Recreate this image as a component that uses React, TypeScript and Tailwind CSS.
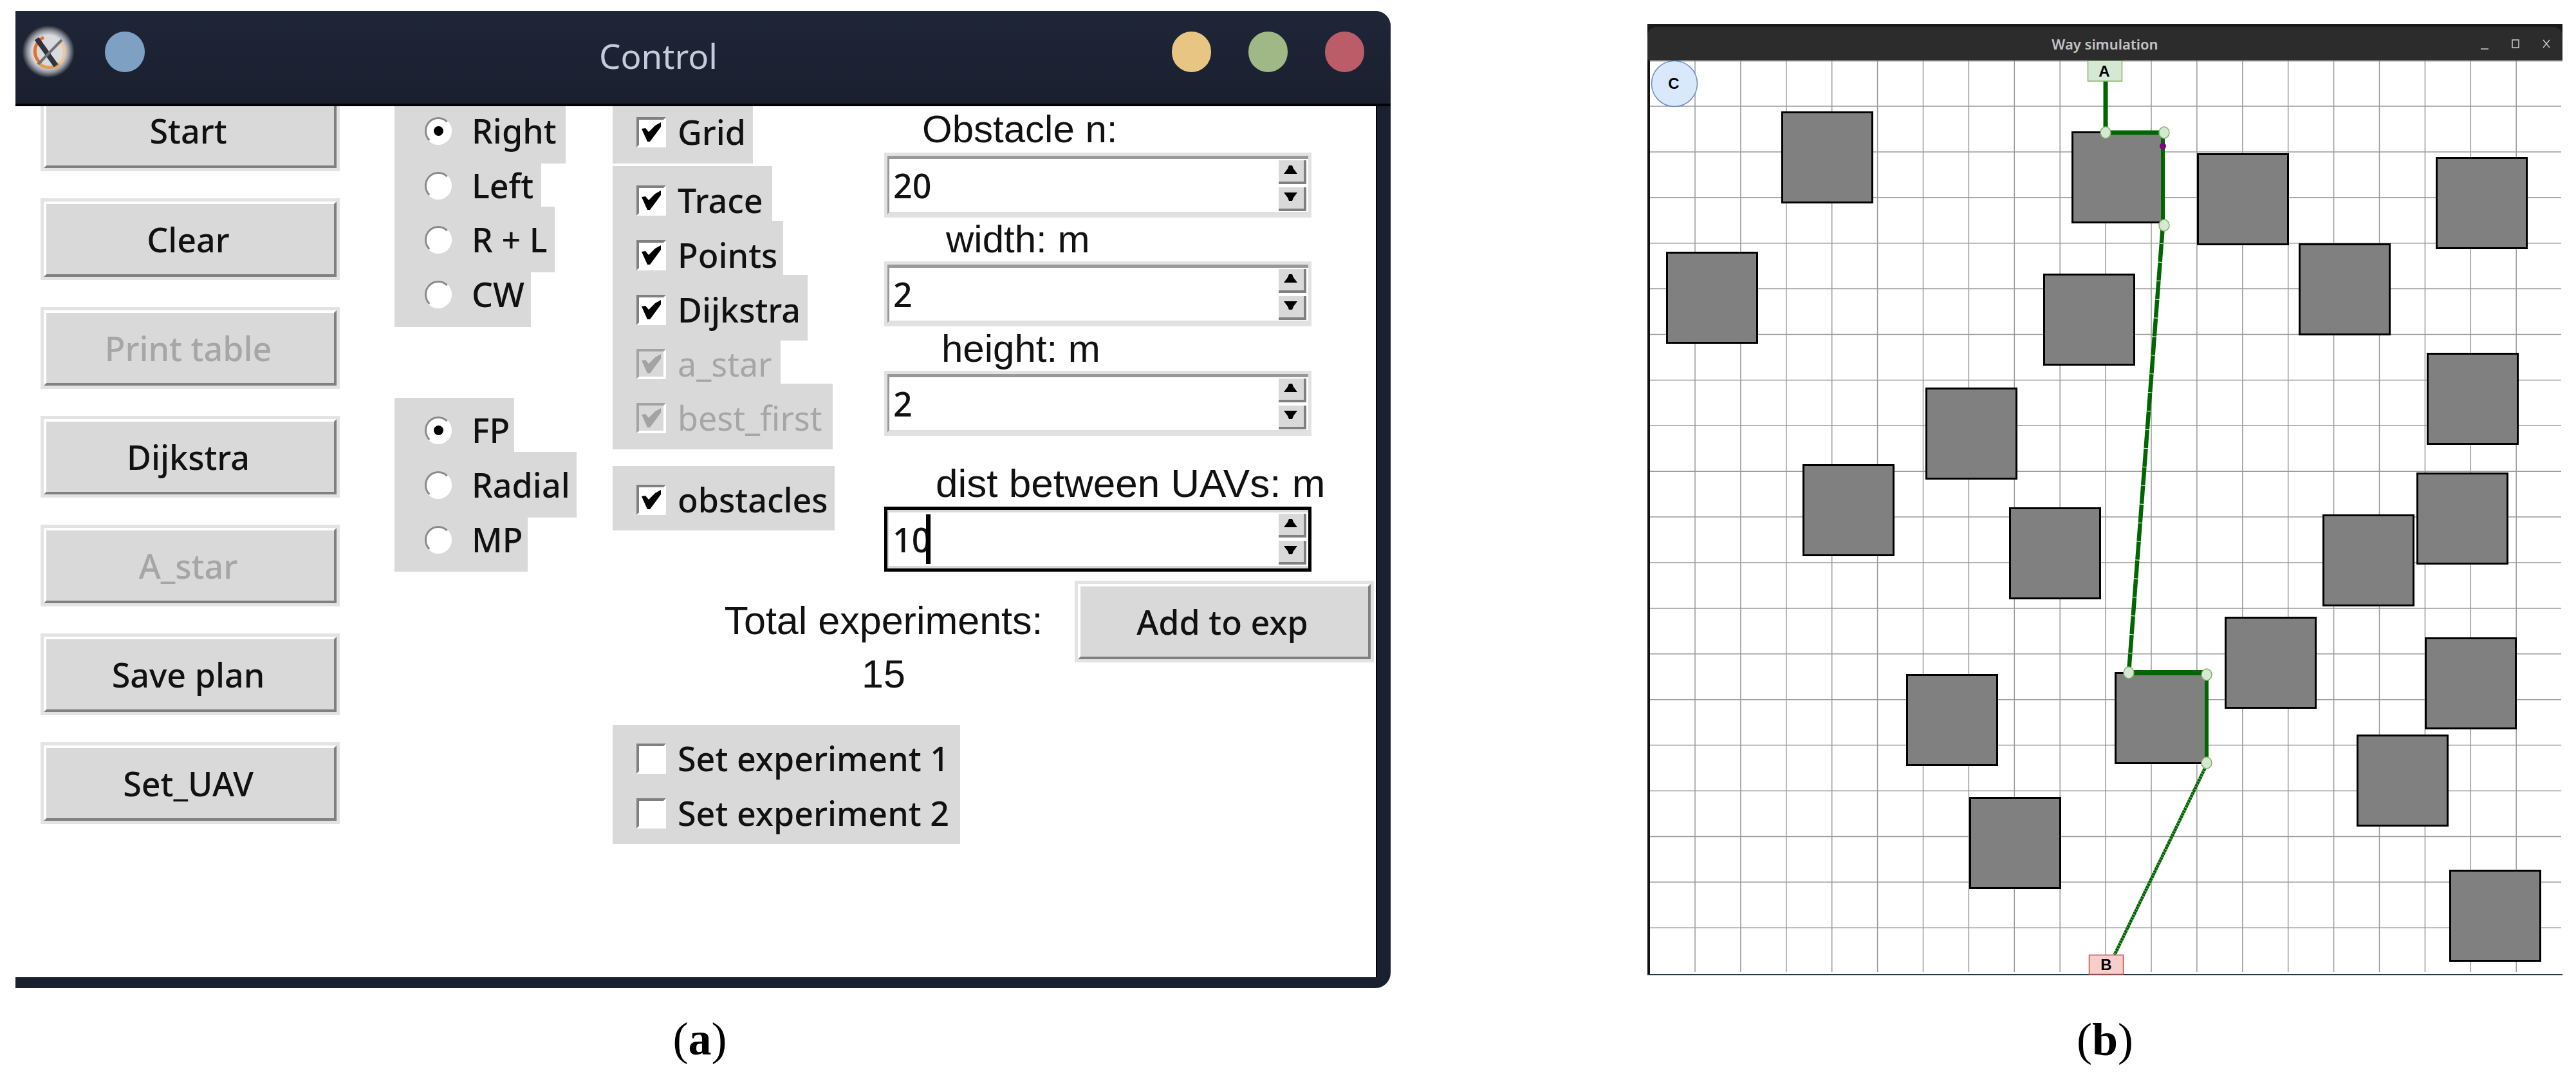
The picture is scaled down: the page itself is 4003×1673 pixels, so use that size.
import React from "react";

const buttons = [
  { label: "Start" },
  { label: "Clear" },
  { label: "Print table", disabled: true },
  { label: "Dijkstra" },
  { label: "A_star", disabled: true },
  { label: "Save plan" },
  { label: "Set_UAV" },
];

const modeRadios = [
  { label: "Right", on: true, cls: "h-[89px] w-[266px] pt-[17px]" },
  { label: "Left", cls: "h-[67px] w-[228px] pt-[13px]" },
  { label: "R + L", cls: "h-[102px] w-[249px] pt-[30px]" },
  { label: "CW", cls: "h-[85px] w-[212px] pt-[13px]" },
];

const planRadios = [
  { label: "FP", on: true, cls: "h-[84px] w-[186px] pt-[29px]" },
  { label: "Radial", cls: "h-[102px] w-[283px] pt-[30px]" },
  { label: "MP", cls: "h-[84px] w-[207px] pt-[13px]" },
];

const traceChecks = [
  { label: "Trace", cls: "h-[85px] w-[248px] pt-[30px]" },
  { label: "Points", cls: "h-[84px] w-[265px] pt-[30px]" },
  { label: "Dijkstra", cls: "h-[102px] w-[303px] pt-[31px]" },
  { label: "a_star", disabled: true, cls: "h-[67px] w-[261px] pt-[13px]" },
  { label: "best_first", disabled: true, cls: "h-[102px] w-[342px] pt-[30px]" },
];

const obstacles = [
  [2768, 174], [2589, 392], [3219, 205], [3175, 426], [3414, 239],
  [3785, 245], [3572, 379], [3771, 549], [2992, 603], [2801, 722],
  [3122, 789], [3609, 800], [3755, 735], [3457, 959], [3768, 991],
  [2962, 1048], [3286, 1045], [3662, 1142], [3060, 1239], [3806, 1352],
];

const nodes = [
  [3272, 206], [3363, 206], [3363, 350], [3308, 1045], [3429, 1048], [3429, 1185],
];

const verticals = Array.from({ length: 19 }, (_, i) => 2634 + i * 70.9);
const horizontals = Array.from({ length: 19 }, (_, i) => 165 + i * 70.9);

function TkButton({ label, disabled }: { label: string; disabled?: boolean }) {
  return (
    <div className="h-[127px] w-[465px] shrink-0 border-[5px] border-[#e3e3e3]">
      <div
        className={`flex h-full items-center justify-center border-[4px] border-t-white border-l-white border-r-[#808080] border-b-[#808080] bg-[#d9d9d9] pr-[6px] text-[52px] font-medium ${
          disabled ? "text-[#a6a6a6]" : "text-[#111]"
        }`}
      >
        {label}
      </div>
    </div>
  );
}

function Radio({ label, on, cls }: { label: string; on?: boolean; cls: string }) {
  return (
    <div className={`flex items-start bg-[#d9d9d9] pl-[47px] ${cls}`}>
      <div className="flex h-[43px] w-[42px] items-center justify-center rounded-full border-[3px] border-t-[#8a8a8a] border-l-[#8a8a8a] border-r-white border-b-white bg-white">
        {on && <div className="h-[15px] w-[15px] rounded-full bg-black" />}
      </div>
      <span className="ml-[31px] text-[52px] leading-[41px] font-medium text-[#111]">{label}</span>
    </div>
  );
}

function Check({
  label,
  checked = true,
  disabled,
  cls,
}: {
  label: string;
  checked?: boolean;
  disabled?: boolean;
  cls: string;
}) {
  return (
    <div className={`flex items-start bg-[#d9d9d9] pl-[37px] ${cls}`}>
      <div
        className={`h-[47px] w-[46px] border-[4px] border-r-white border-b-white ${
          disabled ? "border-t-[#a3a3a3] border-l-[#a3a3a3] bg-[#d9d9d9]" : "border-t-[#808080] border-l-[#808080] bg-white"
        }`}
      >
        {checked && (
          <svg viewBox="4 4 38 39" className="block h-full w-full">
            <polygon
              points="8,18 14,17 19,23 29,13 38,8 38,15 21,38 17,38"
              fill={disabled ? "#a3a3a3" : "#000"}
            />
          </svg>
        )}
      </div>
      <span
        className={`ml-[18px] text-[52px] leading-[45px] whitespace-nowrap ${
          disabled ? "text-[#a6a6a6]" : "font-medium text-[#111]"
        }`}
      >
        {label}
      </span>
    </div>
  );
}

function Spin({ value, focused }: { value: string; focused?: boolean }) {
  return (
    <div className={`h-[101px] w-[664px] border-[5px] ${focused ? "border-black" : "border-[#e2e2e2]"}`}>
      <div
        className={`flex h-full items-center bg-white pl-[6px] pr-[3px] ${
          focused
            ? "border-t-[4px] border-l-[2px] border-b-[4px] border-[#d9d9d9]"
            : "border-t-[5px] border-l-[3px] border-b-[4px] border-t-[#999] border-l-[#999] border-b-[#e0e0e0]"
        }`}
      >
        <span className="text-[52px] font-medium text-[#111]">{value}</span>
        {focused && <span className="-ml-[8px] h-[77px] w-[7px] bg-black" />}
        <div className="ml-auto flex w-[43px] flex-col gap-[5px]">
          <div className="h-[37px] border-r-[4px] border-b-[4px] border-[#808080] bg-[#d9d9d9]">
            <svg viewBox="0 0 39 33" className="block h-full w-full">
              <polygon points="8,21 14,13 16,8 21,8 23,13 29,21" fill="#000" />
            </svg>
          </div>
          <div className="h-[37px] border-r-[4px] border-b-[4px] border-[#808080] bg-[#d9d9d9]">
            <svg viewBox="0 0 39 33" className="block h-full w-full">
              <polygon points="8,8 29,8 23,16 21,21 16,21 14,16" fill="#000" />
            </svg>
          </div>
        </div>
      </div>
    </div>
  );
}

function XLogo() {
  return (
    <svg width="82" height="82" viewBox="0 0 82 82">
      <defs>
        <radialGradient id="xglow">
          <stop offset="0.62" stopColor="#d8dade" />
          <stop offset="0.8" stopColor="#8d9098" />
          <stop offset="1" stopColor="#1a2030" />
        </radialGradient>
      </defs>
      <circle cx="41" cy="41" r="41" fill="url(#xglow)" />
      <path d="M34 19 A24 24 0 0 0 30 60" stroke="#e8702a" strokeWidth="5" fill="none" />
      <path d="M28 61 A24 24 0 0 0 58 60" stroke="#e39a55" strokeWidth="5" fill="none" />
      <path d="M58 60 A24 24 0 0 0 60 26" stroke="#f2c68c" strokeWidth="4" fill="none" />
      <line x1="23" y1="21" x2="53" y2="63" stroke="#2f333b" strokeWidth="8" />
      <line x1="62" y1="23" x2="25" y2="61" stroke="#6e7278" strokeWidth="4" />
    </svg>
  );
}

function ControlWindow() {
  return (
    <div className="flex h-[1518px] w-[2137px] shrink-0 flex-col rounded-r-[24px] bg-[#1a2030] pb-[17px] pr-[21px] font-['Noto_Sans',sans-serif]">
      <div className="-mr-[21px] flex h-[148px] shrink-0 items-start rounded-tr-[24px] border-b-[4px] border-black bg-linear-to-b from-[#1f2638] to-[#191f2e] pl-[10px] pr-[41px]">
        <div className="mt-[22px] flex items-center gap-[47px]">
          <XLogo />
          <div className="h-[63px] w-[62px] rounded-full bg-[#7da0c3]" />
        </div>
        <div className="mt-[34px] flex flex-1 justify-center text-[53px] leading-[72px] text-[#c3ccd8]">Control</div>
        <div className="mt-[32px] flex gap-[58px]">
          <div className="h-[63px] w-[61px] rounded-full bg-[#e8c583]" />
          <div className="h-[63px] w-[61px] rounded-full bg-[#a0b786]" />
          <div className="h-[63px] w-[61px] rounded-full bg-[#bb5c68]" />
        </div>
      </div>

      <div className="flex min-h-0 flex-1 items-start overflow-hidden border-r-[2px] border-black bg-white pl-[39px]">
        <div className="-mt-[26px] flex shrink-0 flex-col gap-[42px]">
          {buttons.map((b) => (
            <TkButton key={b.label} label={b.label} disabled={b.disabled} />
          ))}
        </div>

        <div className="ml-[85px] w-[283px] shrink-0">
          {modeRadios.map((r) => (
            <Radio key={r.label} {...r} />
          ))}
          <div className="h-[110px]" />
          {planRadios.map((r) => (
            <Radio key={r.label} {...r} />
          ))}
        </div>

        <div className="ml-[56px] flex w-[1186px] shrink-0 flex-col">
          <div className="flex">
            <div className="w-[345px] shrink-0">
              <Check label="Grid" cls="h-[89px] w-[218px] pt-[17px]" />
              <div className="mt-[4px]">
                {traceChecks.map((c) => (
                  <Check key={c.label} {...c} />
                ))}
              </div>
              <div className="mt-[26px]">
                <Check label="obstacles" cls="h-[100px] w-[345px] pt-[29px]" />
              </div>
            </div>

            <div className="ml-[77px] flex w-[664px] flex-col font-['Liberation_Sans',sans-serif] text-[60px] whitespace-nowrap text-[#111]">
              <div className="flex h-[72px] items-center pl-[59px]">Obstacle n:</div>
              <div className="font-['Noto_Sans',sans-serif]">
                <Spin value="20" />
              </div>
              <div className="flex h-[68px] items-center pl-[96px]">width: m</div>
              <div className="font-['Noto_Sans',sans-serif]">
                <Spin value="2" />
              </div>
              <div className="flex h-[69px] items-center pl-[89px]">height: m</div>
              <div className="-mb-px font-['Noto_Sans',sans-serif]">
                <Spin value="2" />
              </div>
              <div className="flex h-[111px] items-end pb-[6px] pl-[80px] text-[62px] leading-[60px]">dist between UAVs: m</div>
              <div className="font-['Noto_Sans',sans-serif]">
                <Spin value="10" focused />
              </div>
            </div>
          </div>

          <div className="mt-[14px] flex items-start">
            <div className="ml-[173px] flex w-[545px] flex-col pr-[49px] pt-[32px] text-center font-['Liberation_Sans',sans-serif] text-[61px] leading-[60px] text-[#111]">
              <span className="whitespace-nowrap">Total experiments:</span>
              <span className="mt-[23px]">15</span>
            </div>
            <TkButton label="Add to exp" />
          </div>

          <div className="mt-[49px] flex h-[185px] w-[540px] flex-col gap-[38px] bg-[#d9d9d9] pt-[29px]">
            <Check label="Set experiment 1" checked={false} cls="" />
            <Check label="Set experiment 2" checked={false} cls="" />
          </div>
        </div>
      </div>
    </div>
  );
}

function SimWindow() {
  return (
    <div className="flex w-[1422px] flex-col">
      <div className="bg-[#1a1a1a] pt-[5px]">
        <div className="grid h-[52px] grid-cols-3 items-center rounded-t-[14px] bg-[#2c2c2c] font-['Noto_Sans',sans-serif]">
          <div />
          <div className="text-center text-[22px] font-semibold whitespace-nowrap text-[#c4c4c4]">Way simulation</div>
          <div className="flex justify-end pr-[1px] text-[#c4c4c4]">
            <div className="flex w-[48px] justify-center">
              <svg width="14" height="20" viewBox="0 0 14 20">
                <line x1="1" y1="18" x2="13" y2="18" stroke="currentColor" strokeWidth="1.6" />
              </svg>
            </div>
            <div className="flex w-[48px] justify-center">
              <svg width="14" height="20" viewBox="0 0 14 20">
                <rect x="2" y="4" width="10" height="12" fill="none" stroke="currentColor" strokeWidth="1.6" />
              </svg>
            </div>
            <div className="flex w-[48px] justify-center">
              <svg width="14" height="20" viewBox="0 0 14 20">
                <path d="M2 4 L12 16 M12 4 L2 16" stroke="currentColor" strokeWidth="1.6" />
              </svg>
            </div>
          </div>
        </div>
      </div>
      <svg viewBox="2560 94 1422 1421" width="1422" height="1421" className="block">
        <line x1="2562" y1="94" x2="2562" y2="1514" stroke="#111" strokeWidth="4" />
        <line x1="2564" y1="95" x2="3982" y2="95" stroke="#d0d0d0" strokeWidth="2" />
        {verticals.map((x) => (
          <line key={x} x1={x} y1="94" x2={x} y2="1510" stroke="#9a9a9a" strokeWidth="1.5" />
        ))}
        {horizontals.map((y) => (
          <line key={y} x1="2564" y1={y} x2="3980" y2={y} stroke="#9a9a9a" strokeWidth="1.5" />
        ))}
        <line x1="2560" y1="1514" x2="3982" y2="1514" stroke="#1f3550" strokeWidth="2" />

        {obstacles.map(([x, y]) => (
          <rect key={`${x}-${y}`} x={x + 1.5} y={y + 0.5} width="140" height="140" fill="#808080" stroke="#000" strokeWidth="3" />
        ))}

        <g fill="none" stroke="#006600" strokeLinejoin="miter">
          <path d="M3272 126 V206 H3363" strokeWidth="7" />
          <path d="M3361 206 V350" strokeWidth="6" />
          <path d="M3361 350 L3308 1045" strokeWidth="6.5" strokeDasharray="28 1" />
          <path d="M3308 1045 H3429" strokeWidth="8" />
          <path d="M3429 1048 V1185" strokeWidth="6" />
          <path d="M3428 1190 L3286 1483" strokeWidth="5" strokeDasharray="4 0.5" />
        </g>
        {nodes.map(([x, y]) => (
          <ellipse key={`${x}-${y}`} cx={x} cy={y} rx="8" ry="9" fill="#d5e8d4" stroke="#82b366" strokeWidth="1.5" />
        ))}
        <circle cx="3361" cy="227" r="5" fill="#800080" />

        <ellipse cx="2602" cy="130" rx="35.5" ry="35.5" fill="#dae8fc" stroke="#6c8ebf" strokeWidth="1.5" />
        <rect x="3244.5" y="94" width="53" height="32" fill="#d5e8d4" stroke="#82b366" strokeWidth="1.5" />
        <rect x="3246.5" y="1483.5" width="53" height="30" fill="#f8cecc" stroke="#b85450" strokeWidth="1.5" />
        <g className="font-['Liberation_Sans',sans-serif]" fontWeight="700" fontSize="24" textAnchor="middle" fill="#000">
          <text x="3270" y="119">A</text>
          <text x="2601" y="138">C</text>
          <text x="3273" y="1507">B</text>
        </g>
      </svg>
    </div>
  );
}

export default function App() {
  return (
    <div className="flex h-[1673px] w-[4003px] items-start overflow-hidden bg-white pl-[24px] pt-[17px]">
      <div className="flex w-[2137px] shrink-0 flex-col">
        <ControlWindow />
        <div className="mt-[43px] pr-[10px] text-center font-['Liberation_Serif',serif] text-[72px] leading-[72px] text-black">
          (<span className="font-bold">a</span>)
        </div>
      </div>
      <div className="ml-[399px] mt-[20px] flex w-[1422px] shrink-0 flex-col">
        <SimWindow />
        <div className="mt-[64px] text-center font-['Liberation_Serif',serif] text-[72px] leading-[72px] text-black">
          (<span className="font-bold">b</span>)
        </div>
      </div>
    </div>
  );
}
